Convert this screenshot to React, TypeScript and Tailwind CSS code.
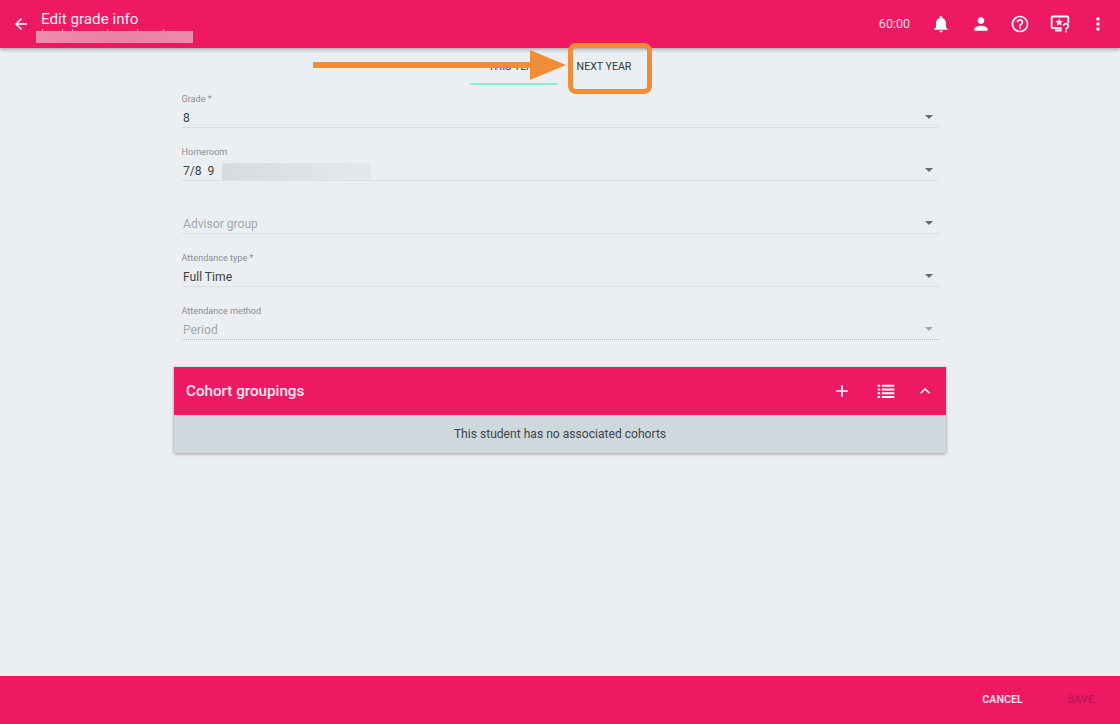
import React from 'react';

const Icon: React.FC<{ d: string; className?: string }> = ({ d, className }) => (
  <svg viewBox="0 0 24 24" fill="currentColor" className={className}>
    <path d={d} />
  </svg>
);

const ICONS = {
  back: "M20 11H7.83l5.59-5.59L12 4l-8 8 8 8 1.41-1.41L7.83 13H20v-2z",
  bell: "M12 22c1.1 0 2-.9 2-2h-4c0 1.1.89 2 2 2zm6-6v-5c0-3.07-1.64-5.64-4.5-6.32V4c0-.83-.67-1.5-1.5-1.5s-1.5.67-1.5 1.5v.68C7.63 5.36 6 7.92 6 11v5l-2 2v1h16v-1l-2-2z",
  person: "M12 12c2.21 0 4-1.79 4-4s-1.79-4-4-4-4 1.79-4 4 1.79 4 4 4zm0 2c-2.67 0-8 1.34-8 4v2h16v-2c0-2.66-5.33-4-8-4z",
  help: "M11 18h2v-2h-2v2zm1-16C6.48 2 2 6.48 2 12s4.48 10 10 10 10-4.48 10-10S17.52 2 12 2zm0 18c-4.41 0-8-3.59-8-8s3.59-8 8-8 8 3.59 8 8-3.59 8-8 8zm0-14c-2.21 0-4 1.79-4 4h2c0-1.1.9-2 2-2s2 .9 2 2c0 2-3 1.75-3 5h2c0-2.25 3-2.5 3-5 0-2.21-1.79-4-4-4z",
  more: "M12 8c1.1 0 2-.9 2-2s-.9-2-2-2-2 .9-2 2 .9 2 2 2zm0 2c-1.1 0-2 .9-2 2s.9 2 2 2 2-.9 2-2-.9-2-2-2zm0 6c-1.1 0-2 .9-2 2s.9 2 2 2 2-.9 2-2-.9-2-2-2z",
  add: "M19 13h-6v6h-2v-6H5v-2h6V5h2v6h6v2z",
  less: "M12 8l-6 6 1.41 1.41L12 10.83l4.59 4.58L18 14z",
  list: "M2 4.500h3v2.500H2zM7 4.500h15v2.500H7zM2 9h3v2.500H2zM7 9h15v2.500H7zM2 13.500h3V16H2zM7 13.500h15V16H7zM2 18h3v2.500H2zM7 18h15v2.500H7z",
};

// tops of the name's letters that stick out above the blur
const NAME_TICKS = [1, 21, 31, 66, 96, 122];

// monitor with a star and a question mark, the tour/help icon in the toolbar
const TourIcon = () => (
  <svg viewBox="0 0 24 24" className="w-5 h-5 text-white" fill="none">
    <path d="M14 17H3.500A1.500 1.500 0 0 1 2 15.500v-11A1.500 1.500 0 0 1 3.500 3h17A1.500 1.500 0 0 1 22 4.500V11" stroke="currentColor" strokeWidth="2.200" />
    <path d="M6 18.500h8V21H6z" fill="currentColor" />
    <path d="M11 5.500l1.300 2.800 3 .3-2.200 2.100.6 3-2.700-1.500-2.700 1.500.6-3-2.200-2.100 3-.3z" fill="currentColor" />
    <path d="M16.300 14.500a2.800 2.800 0 1 1 4.300 2.300c-1.100.7-1.500 1.100-1.500 2" stroke="currentColor" strokeWidth="2" />
    <path d="M18 20h2.200v2.200H18z" fill="currentColor" />
  </svg>
);

const Field: React.FC<{
  label?: string;
  value: string;
  muted?: boolean;
  dotted?: boolean;
  children?: React.ReactNode;
}> = ({ label, value, muted, dotted, children }) => (
  <div className="h-[53px] flex flex-col">
    <div className="h-[13px] text-[9.1px] leading-[13px] text-[#8a8e91]">{label}</div>
    <div className={`h-[20px] mt-[2px] flex items-center pl-[1.5px] pr-[6px] border-b ${dotted ? 'border-dotted border-[#b5b9bc]' : 'border-[#d9dde0]'}`}>
      <span className={`text-[12.100px] pt-[1px] whitespace-pre ${muted ? 'text-[#a3a7aa]' : 'text-[#3b4043]'}`}>{value}</span>
      {children}
      <span className={`ml-auto mb-[2px] w-0 h-0 border-x-[4px] border-x-transparent border-t-[4px] ${dotted ? 'border-t-[#a3a7aa]' : 'border-t-[#63686b]'}`}></span>
    </div>
  </div>
);

const App: React.FC = () => {
  return (
    <div className="relative w-[1120px] h-[724px] overflow-hidden flex flex-col bg-[#eceff2] font-['Roboto',sans-serif]">
      {/* Toolbar */}
      <header className="h-12 shrink-0 bg-[#ed1a63] text-white flex items-center shadow-[0_1px_4px_rgba(0,0,0,0.4)] relative z-10">
        <Icon d={ICONS.back} className="w-[18px] h-[18px] ml-3" />
        <div className="relative ml-[11px] h-12 w-[160px]">
          <div className="pt-[9px] text-[15.200px] leading-[20px] text-[#fde8f0]">Edit grade info</div>
          {NAME_TICKS.map((x) => (
            <div key={x} className="absolute top-[29px] w-[1px] h-[2px] bg-[#f6a9c4]" style={{ left: x }}></div>
          ))}
          {/* blurred name */}
          <div className="absolute left-[-5px] top-[31px] w-[157px] h-[12px] bg-gradient-to-r from-[#ee8bae] via-[#e883a6] to-[#e98cae] blur-[0.5px]"></div>
        </div>
        <div className="ml-auto flex items-center">
          <span className="text-[12.500px] text-[#fbdde8] mr-[21px]">60:00</span>
          <Icon d={ICONS.bell} className="w-5 h-5 mr-[20px]" />
          <Icon d={ICONS.person} className="w-5 h-5 mr-[19px]" />
          <Icon d={ICONS.help} className="w-5 h-5 mr-[20px]" />
          <TourIcon />
          <Icon d={ICONS.more} className="w-5 h-5 ml-[18px] mr-[12px]" />
        </div>
      </header>

      <main className="flex-1 flex flex-col items-center">
        {/* Tabs */}
        <div className="h-[37px] flex pr-[4px] text-[10.600px] text-[#33383b]">
          <div className="w-[88px] flex items-center justify-center border-b-2 border-[#8ff0d8] pt-[3px]">THIS YEAR</div>
          <div className="w-[88px] flex items-center justify-center pt-[1px] pl-[4px]">NEXT YEAR</div>
        </div>

        <div className="w-[757px] mt-[8px]">
          <Field label="Grade *" value="8" />
          <Field label="Homeroom" value="7/8  9">
            <div className="ml-[8px] mt-[1px] w-[149px] h-[17px] bg-gradient-to-r from-[#d7dbde] to-[#e6e9ec]"></div>
          </Field>
          <Field value="Advisor group" muted />
          <Field label="Attendance type *" value="Full Time" />
          <Field label="Attendance method" value="Period" muted dotted />
        </div>

        {/* Cohort groupings */}
        <section className="w-[772px] mt-[9px] shadow-[0_1px_3px_rgba(0,0,0,0.35)]">
          <div className="h-12 bg-[#ed1a63] text-white flex items-center pl-3 pr-[11px]">
            <h2 className="text-[15.200px] font-medium text-[#fde8f0]">Cohort groupings</h2>
            <Icon d={ICONS.add} className="w-5 h-5 ml-auto" />
            <Icon d={ICONS.list} className="w-5 h-5 ml-[24px]" />
            <Icon d={ICONS.less} className="w-5 h-5 ml-[19px]" />
          </div>
          <div className="h-[38px] bg-[#cfd8dd] flex items-center justify-center text-[12.100px] text-[#3f4548]">
            This student has no associated cohorts
          </div>
        </section>
      </main>

      {/* Footer actions */}
      <footer className="h-12 shrink-0 bg-[#ed1a63] flex items-center justify-end text-[10.700px] font-semibold pr-[26px]">
        <span className="text-[#fde0ea] mr-[45px]">CANCEL</span>
        <span className="text-[#b8155a]">SAVE</span>
      </footer>

      {/* Tutorial annotation drawn over the tabs */}
      <svg viewBox="0 0 260 40" className="absolute left-[312px] top-[47px] w-[260px] h-[40px] z-20">
        <path d="M1 15h218v6H1z" fill="#f08d39" />
        <path d="M218 3l36 15-36 15z" fill="#f08d39" />
      </svg>
      <div className="absolute left-[568px] top-[43px] w-[84px] h-[51px] rounded-[8px] border-[5px] border-[#f08d39] z-20"></div>
    </div>
  );
};

export default App;
